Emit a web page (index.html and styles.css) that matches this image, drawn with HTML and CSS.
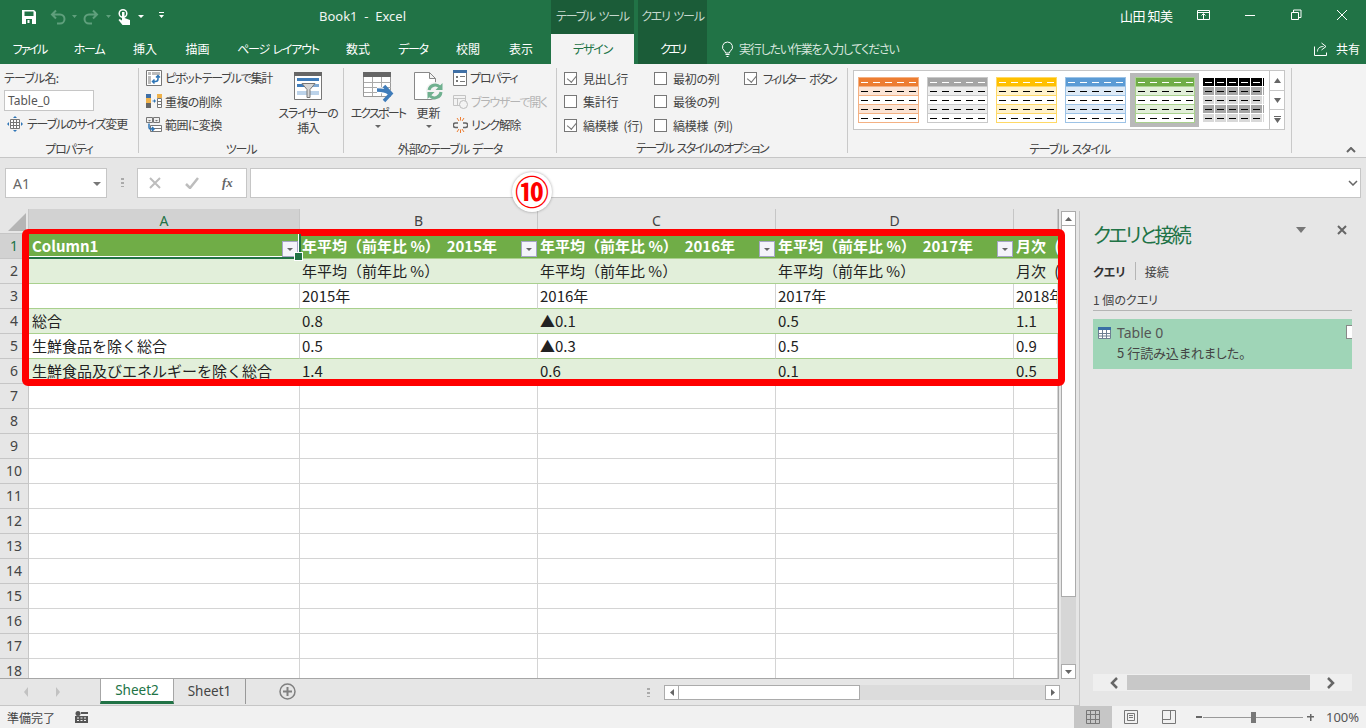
FILE: index.html
```html
<!DOCTYPE html>
<html lang="ja">
<head>
<meta charset="utf-8">
<title>Book1 - Excel</title>
<link rel="stylesheet" href="styles.css">
</head>
<body>
<div class="app">
  <header class="titlebar">
    <svg class="qat" width="170" height="34" viewBox="0 0 170 34">
      <path fill="#fff" fill-rule="evenodd" d="M22 10h12l2 2v12H22zM24.500 11.500V16h9v-4.500zM26 19v5h6v-5z"/>
      <rect x="27.500" y="20" width="2" height="3" fill="#fff"/>
      <g fill="none" stroke="#5f9f7c" stroke-width="2"><path d="M56 10.500L52 14.500l4 4M52.500 14.500H60a4.500 4.500 0 0 1 0 9h-3"/><path d="M93 10.500l4 4-4 4M96.500 14.500H89a4.500 4.500 0 0 0 0 9h3"/></g>
      <path fill="#5f9f7c" d="M72 15h5l-2.500 3zM106 15h5l-2.500 3z"/>
      <circle cx="123" cy="13.500" r="3.800" fill="none" stroke="#fff" stroke-width="1.500"/>
      <path fill="#fff" d="M122 12h2.500v6l5.500 2v5h-7.500l-4-5 1.200-1 2.300 1.500z"/>
      <path fill="#fff" d="M138 15h6l-3 3zM159 12h5v1h-5zM159 15h5l-2.500 3z"/>
    </svg>
    <div class="doc-title">Book1&nbsp; -&nbsp; Excel</div>
    <div class="ctx ctx-table">テーブル ツール</div>
    <div class="ctx-gap"></div>
    <div class="ctx ctx-query">クエリ ツール</div>
    <div class="user">山田 知美</div>
    <svg class="winctl" width="174" height="34" viewBox="0 0 174 34">
      <g fill="none" stroke="#fff">
        <path d="M6.500 10.500h12v9h-12zM6.500 12.500h12M12.500 19v-5M10.500 15.500l2-2 2 2"/>
        <path d="M54 15.500h10"/>
        <path d="M100.500 12.500h7v7h-7zM102.500 12v-2h7.500v7.500h-2"/>
        <path d="M146 10l10 10M156 10l-10 10"/>
      </g>
    </svg>
  </header>

  <nav class="tabbar">
    <span class="tab tab-tight">ファイル</span><span class="tab">ホーム</span><span class="tab kj0">挿入</span><span class="tab kj0">描画</span><span class="tab">ページ レイアウト</span><span class="tab kj0">数式</span><span class="tab">データ</span><span class="tab kj0">校閲</span><span class="tab kj0">表示</span><span></span>
    <span class="tab tab-active">デザイン</span><span></span><span class="tab tab-query">クエリ</span>
    <span class="search">
      <svg width="13" height="16" viewBox="0 0 13 16"><path fill="none" stroke="#fff" d="M6.500 1a5 5 0 0 0-3 9c.7.600 1 1.200 1 2h4c0-.8.300-1.400 1-2a5 5 0 0 0-3-9zM4.500 13.500h4M5.500 15.500h2"/></svg>
      実行したい作業を入力してください
    </span>
    <span class="share">
      <svg width="14" height="14" viewBox="0 0 14 14"><path fill="none" stroke="#fff" d="M.500 4.500v9h12v-3M3.500 9.500c0-3.500 2.500-5 6-5M7.500 1l4.500 3.500L7.500 8"/></svg>
      共有
    </span>
  </nav>

  <section class="ribbon">
    <div class="group g1">
      <div class="body col-body">
        <div class="name-label">テーブル名:</div>
        <div class="name-input">Table_0</div>
        <div class="line resize">
          <svg width="16" height="16" viewBox="0 0 16 16"><path fill="#fff" stroke="#777" d="M3.500 3.500h9v9h-9z"/><path stroke="#777" d="M6.500 3v9M9.500 3v9M3 6.500h9M3 9.500h9"/><path fill="#2e75b6" d="M8 0l2 2H6zM8 16l-2-2h4zM0 8l2-2v4zM16 8l-2 2V6z"/></svg>
          テーブルのサイズ変更
        </div>
      </div>
      <div class="glabel">プロパティ</div>
    </div>

    <div class="group g2">
      <div class="body row-body">
        <div class="stack stack-tools">
          <div class="line"><svg width="16" height="16" viewBox="0 0 16 16"><path fill="#fff" stroke="#777" d="M.500.500h15v15H.500z"/><path fill="#bbb" d="M2 2h3v3H2zM6 2h8v3H6zM2 6h3v8H2z"/><path fill="none" stroke="#2e75b6" stroke-width="1.500" d="M12 6v3c0 1.500-1 2.500-2.500 2.500H7M10 7.500l2-2 2 2M8.500 9.500l-2 2 2 2"/></svg>ピボットテーブルで集計</div>
          <div class="line kj"><svg width="16" height="16" viewBox="0 0 16 16"><path fill="#3f6fa5" d="M0 1h5v4H0z"/><path fill="#f0b24a" d="M0 5h5v5H0zM11 1h5v4h-5z"/><path fill="#666" d="M0 10h5v5H0z"/><path fill="#fff" stroke="#777" d="M11.500 5.500h4v9h-4z"/><path stroke="#777" d="M11 8.500h4M11 11.500h4"/><path fill="#2e75b6" d="M6.500 7.500H8V6l2 2-2 2V8.500H6.500z"/></svg>重複の削除</div>
          <div class="line kj"><svg width="16" height="16" viewBox="0 0 16 16"><path fill="#eee" stroke="#777" d="M.500.500h6v5h-6zM7.500.500h6v5h-6z"/><path fill="#777" d="M2 3h3l-1.500 1.500zM9 3h3l-1.500 1.500z"/><path fill="#fff" stroke="#777" d="M4.500 8.500h11v6h-11z"/><path stroke="#777" d="M5 11.500h10"/><path fill="none" stroke="#2e75b6" stroke-width="1.500" d="M3 6.500v4c0 1 .5 1.500 1.500 1.500H8M6 10l2 2-2 2"/></svg>範囲に変換</div>
        </div>
        <div class="big slicer">
          <svg width="28" height="28" viewBox="0 0 28 28"><path fill="#fff" stroke="#777" d="M.500 1.500h27v26H.500z"/><path fill="#666" d="M0 0h28v4H0z"/><path fill="#3f7cba" d="M3 6h22v3H3zM3 12h9v3H3z"/><path fill="#7fa9d3" d="M17 12h8v3h-8z"/><path fill="#bcd3ea" d="M3 19h22v4H3z"/><path fill="#d6d6d6" stroke="#777" d="M8 11.500h13l-5 6v8h-3v-8z"/></svg>
          <span class="big-text">スライサーの<br>挿入</span>
        </div>
      </div>
      <div class="glabel">ツール</div>
    </div>

    <div class="group g3">
      <div class="body row-body">
        <div class="big export">
          <svg class="over" width="30" height="28" viewBox="0 0 30 28"><path fill="#fff" stroke="#999" d="M.500 1.500h27v23H.500z"/><path fill="#666" d="M0 0h28v5H0z"/><path stroke="#aaa" d="M9.500 5v19M18.500 5v19M1 10.500h27M1 15.500h27M1 20.500h27"/><path fill="none" stroke="#fff" stroke-width="6" d="M14 18c4 0 8 0 12 3"/><path fill="none" stroke="#3f7cba" stroke-width="3.500" d="M14 18c4 0 8 0 12 3M21 14l7 7.500-7 7.500"/></svg>
          <span class="big-text tight">エクスポート</span>
          <span class="caret"></span>
        </div>
        <div class="big refresh">
          <svg width="30" height="28" viewBox="0 0 30 28"><path fill="#fff" stroke="#888" d="M.500.500h15l6 6v21H.500zM15.500.500v6h6"/><circle cx="21" cy="19" r="9" fill="#f3f3f3"/><path fill="none" stroke="#6fb08f" stroke-width="3" d="M15 18a6.500 6.500 0 0 1 11-3M27 20a6.500 6.500 0 0 1-11 4"/><path fill="#6fb08f" d="M28.500 11v7h-7zM13.500 27v-7h7z"/></svg>
          <span class="big-text kj0">更新</span>
          <span class="caret"></span>
        </div>
        <div class="stack stack-ext">
          <div class="line"><svg width="14" height="16" viewBox="0 0 14 16"><path fill="#fff" stroke="#777" d="M.500 1.500h13v14H.500z"/><path fill="#3f6fa5" d="M0 0h14v3H0z"/><path fill="#777" d="M3 6h2v2H3zM3 10h2v2H3zM7 6h5v1H7zM7 11h5v1H7z"/></svg>プロパティ</div>
          <div class="line line-off"><svg width="15" height="16" viewBox="0 0 15 16"><path fill="none" stroke="#c4c4c4" d="M.500 2.500h12v10H.500zM.500 5.500h12M4.500 5v8"/><circle cx="10.500" cy="11.500" r="4" fill="#f3f3f3" stroke="#bbb"/></svg>ブラウザーで開く</div>
          <div class="line"><svg width="15" height="16" viewBox="0 0 15 16"><path fill="none" stroke="#666" stroke-width="1.500" d="M5 6H2.500a2 2 0 0 0 0 4.500H5M10 6h2.500a2 2 0 0 1 0 4.500H10"/><path stroke="#ed7d31" d="M4 1l2 3M7.500 0v3.500M11 1L9 4M4 15l2-3M7.500 16v-3.500M11 15l-2-3"/></svg>リンク解除</div>
        </div>
      </div>
      <div class="glabel">外部のテーブル データ</div>
    </div>

    <div class="group g4">
      <div class="body checks">
        <div class="check"><span class="box on"></span>見出し行</div>
        <div class="check"><span class="box"></span>最初の列</div>
        <div class="check tight"><span class="box on"></span>フィルター ボタン</div>
        <div class="check"><span class="box"></span>集計行</div>
        <div class="check"><span class="box"></span>最後の列</div>
        <div class="check"></div>
        <div class="check"><span class="box on"></span>縞模様 (行)</div>
        <div class="check"><span class="box"></span>縞模様 (列)</div>
      </div>
      <div class="glabel glabel-tight">テーブル スタイルのオプション</div>
    </div>

    <div class="group g5">
      <div class="body">
        <div class="gallery">
          <div class="cell"><div class="sw orange"><i></i><i></i><i></i><i></i><i></i></div></div>
          <div class="cell"><div class="sw gray"><i></i><i></i><i></i><i></i><i></i></div></div>
          <div class="cell"><div class="sw yellow"><i></i><i></i><i></i><i></i><i></i></div></div>
          <div class="cell"><div class="sw blue"><i></i><i></i><i></i><i></i><i></i></div></div>
          <div class="cell cell-sel"><div class="sw green"><i></i><i></i><i></i><i></i><i></i></div></div>
          <div class="cell"><div class="sw black"><i></i><i></i><i></i><i></i><i></i></div></div>
          <div class="gal-btns">
            <span class="gal-btn"><svg width="7" height="5" viewBox="0 0 7 5"><path fill="#666" d="M3.500 0L7 5H0z"/></svg></span>
            <span class="gal-btn"><svg width="7" height="5" viewBox="0 0 7 5"><path fill="#666" d="M3.500 5L7 0H0z"/></svg></span>
            <span class="gal-btn"><svg width="7" height="7" viewBox="0 0 7 7"><path fill="#666" d="M0 0h7v1H0zM3.500 7L7 2H0z"/></svg></span>
          </div>
        </div>
      </div>
      <div class="glabel">テーブル スタイル</div>
    </div>

    <div class="collapse">
      <svg width="10" height="6" viewBox="0 0 10 6"><path fill="none" stroke="#666" stroke-width="2" d="M1 5l4-4 4 4"/></svg>
    </div>
  </section>

  <section class="formula">
    <div class="namebox"><span>A1</span><svg width="8" height="4" viewBox="0 0 8 4"><path fill="#777" d="M0 0h8L4 4z"/></svg></div>
    <div class="fdots"></div>
    <div class="fbtns">
      <svg width="12" height="12" viewBox="0 0 12 12"><path stroke="#bdbdbd" stroke-width="2" d="M1 1l10 10M11 1L1 11"/></svg>
      <svg width="14" height="12" viewBox="0 0 14 12"><path fill="none" stroke="#bdbdbd" stroke-width="2.500" d="M1 7l4 4 8-10"/></svg>
      <span class="fx">fx</span>
    </div>
    <div class="finput"><svg width="10" height="6" viewBox="0 0 10 6"><path fill="none" stroke="#666" stroke-width="1.500" d="M1 1l4 4 4-4"/></svg></div>
  </section>

  <main class="main">
    <div class="workarea">
      <div class="gridrow">
        <div class="sheet">
          <table class="grid">
            <colgroup><col class="c0"><col class="ca"><col class="cb"><col class="cb"><col class="cb"><col class="ce"></colgroup>
            <tr class="heads">
              <th class="corner"><svg width="18" height="18" viewBox="0 0 18 18"><path fill="#b5b5b5" d="M18 0v18H0z"/></svg></th>
              <th class="hl-col">A</th><th>B</th><th>C</th><th>D</th><th></th>
            </tr>
            <tr class="thead">
              <th class="hl-row">1</th>
              <td class="a1">Column1<span class="filter"></span></td>
              <td class="pre">年平均（前年比 %）  2015年<span class="filter"></span></td>
              <td class="pre">年平均（前年比 %）  2016年<span class="filter"></span></td>
              <td class="pre">年平均（前年比 %）  2017年<span class="filter"></span></td>
              <td class="col-e">月次 (</td>
            </tr>
            <tr class="band"><th>2</th><td></td><td>年平均（前年比 %）</td><td>年平均（前年比 %）</td><td>年平均（前年比 %）</td><td class="col-e">月次 (</td></tr>
            <tr class="plain"><th>3</th><td></td><td>2015年</td><td>2016年</td><td>2017年</td><td>2018年</td></tr>
            <tr class="band"><th>4</th><td>総合</td><td>0.8</td><td>▲0.1</td><td>0.5</td><td>1.1</td></tr>
            <tr class="plain"><th>5</th><td>生鮮食品を除く総合</td><td>0.5</td><td>▲0.3</td><td>0.5</td><td>0.9</td></tr>
            <tr class="band"><th>6</th><td>生鮮食品及びエネルギーを除く総合</td><td>1.4</td><td>0.6</td><td>0.1</td><td>0.5</td></tr>
            <tr><th>7</th><td></td><td></td><td></td><td></td><td></td></tr>
            <tr><th>8</th><td></td><td></td><td></td><td></td><td></td></tr>
            <tr><th>9</th><td></td><td></td><td></td><td></td><td></td></tr>
            <tr><th>10</th><td></td><td></td><td></td><td></td><td></td></tr>
            <tr><th>11</th><td></td><td></td><td></td><td></td><td></td></tr>
            <tr><th>12</th><td></td><td></td><td></td><td></td><td></td></tr>
            <tr><th>13</th><td></td><td></td><td></td><td></td><td></td></tr>
            <tr><th>14</th><td></td><td></td><td></td><td></td><td></td></tr>
            <tr><th>15</th><td></td><td></td><td></td><td></td><td></td></tr>
            <tr><th>16</th><td></td><td></td><td></td><td></td><td></td></tr>
            <tr><th>17</th><td></td><td></td><td></td><td></td><td></td></tr>
            <tr><th>18</th><td></td><td></td><td></td><td></td><td></td></tr>
          </table>
        </div>
        <div class="vscroll">
          <span class="sbtn"><svg width="7" height="4" viewBox="0 0 7 4"><path fill="#666" d="M3.500 0L7 4H0z"/></svg></span>
          <span class="vthumb"></span>
          <span class="vtrack"></span>
          <span class="sbtn"><svg width="7" height="4" viewBox="0 0 7 4"><path fill="#666" d="M3.500 4L7 0H0z"/></svg></span>
        </div>
      </div>
      <div class="sheetbar">
        <div class="navs">
          <svg width="36" height="10" viewBox="0 0 36 10"><path fill="#c2c2c2" d="M4 0v10L0 5zM32 0v10l4-5z"/></svg>
        </div>
        <div class="stab stab-on">Sheet2</div>
        <div class="stab">Sheet1</div>
        <svg class="addsheet" width="17" height="17" viewBox="0 0 17 17"><circle cx="8.500" cy="8.500" r="7.500" fill="none" stroke="#808080" stroke-width="1.500"/><path stroke="#808080" stroke-width="2" d="M8.500 4v9M4 8.500h9"/></svg>
        <div class="splitdots"></div>
        <div class="hscroll">
          <span class="sbtn"><svg width="4" height="7" viewBox="0 0 4 7"><path fill="#666" d="M0 3.500L4 0v7z"/></svg></span>
          <span class="hthumb"></span>
          <span class="htrack"></span>
          <span class="sbtn"><svg width="4" height="7" viewBox="0 0 4 7"><path fill="#666" d="M4 3.500L0 0v7z"/></svg></span>
        </div>
      </div>
    </div>

    <aside class="pane">
      <div class="pane-head">
        <h2 class="pane-title">クエリと接続</h2>
        <svg class="pane-caret" width="10" height="6" viewBox="0 0 10 6"><path fill="#777" d="M0 0h10L5 6z"/></svg>
        <svg class="pane-x" width="10" height="10" viewBox="0 0 10 10"><path stroke="#666" stroke-width="2" d="M1 1l8 8M9 1L1 9"/></svg>
      </div>
      <div class="pane-tabs"><b>クエリ</b><span class="pane-sep"></span><span>接続</span></div>
      <div class="pane-count">1 個のクエリ</div>
      <div class="qcard">
        <div class="qname">
          <svg width="13" height="12" viewBox="0 0 13 12"><path fill="#fff" stroke="#6d7f92" d="M.500.500h12v11H.500z"/><path fill="#3a6ea5" d="M0 0h13v3H0z"/><path stroke="#6d7f92" d="M4.500 3v8M8.500 3v8M1 6.500h11M1 9h11"/></svg>
          <span>Table 0</span>
        </div>
        <div class="qinfo">5 行読み込まれました。</div>
        <span class="qcheck"></span>
      </div>
      <div class="pane-scroll">
        <svg width="10" height="12" viewBox="0 0 10 12"><path fill="none" stroke="#666" stroke-width="2.500" d="M8 1L3 6l5 5"/></svg>
        <span class="pthumb"></span>
        <svg class="pnext" width="10" height="12" viewBox="0 0 10 12"><path fill="none" stroke="#666" stroke-width="2.500" d="M2 1l5 5-5 5"/></svg>
      </div>
    </aside>
  </main>

  <footer class="status">
    <span class="ready">準備完了</span>
    <svg class="macro" width="13" height="12" viewBox="0 0 13 12"><circle cx="3" cy="2.500" r="2.500" fill="#555"/><path fill="#555" d="M6 1h7v2H6zM0 5h13v7H0z"/><path fill="#f1f1f1" d="M2 6.500h2v1H2zM5.500 6.500h2v1h-2zM9 6.500h2v1H9zM2 9h2v1H2zM5.500 9h2v1h-2zM9 9h2v1H9z"/></svg>
    <div class="views">
      <span class="view view-on"><svg width="14" height="14" viewBox="0 0 14 14"><path fill="none" stroke="#777" d="M.500.500h13v13H.500zM4.500 0v14M9.500 0v14M0 4.500h14M0 9.500h14"/></svg></span>
      <span class="view"><svg width="14" height="14" viewBox="0 0 14 14"><path fill="none" stroke="#777" d="M.500.500h13v13H.500zM3.500 3.500h7v7h-7zM5 5.500h4M5 7.500h4"/></svg></span>
      <span class="view"><svg width="14" height="14" viewBox="0 0 14 14"><path fill="none" stroke="#777" d="M.500.500h13v13H.500zM.500 9.500h8V.500"/></svg></span>
    </div>
    <div class="zoom">
      <span class="z-minus"></span>
      <span class="z-track"><span class="z-thumb"></span></span>
      <span class="z-plus"></span>
    </div>
    <span class="pct">100%</span>
  </footer>

  <div class="redbox"></div>
  <div class="badge">⑩</div>
</div>
</body>
</html>
```
FILE: styles.css
```css
* { box-sizing: border-box; }
html, body { margin: 0; padding: 0; }
body { font-family: "Noto Sans CJK JP", "Noto Sans", sans-serif; background: #e6e6e6; overflow: hidden; }
.app { position: relative; width: 1366px; height: 728px; display: flex; flex-direction: column; overflow: hidden; color: #444; }

/* title bar */
.titlebar { height: 34px; background: #217346; display: flex; color: #fff; font-size: 12px; font-feature-settings: "palt"; flex: none; }
.titlebar > * { flex: none; }
.doc-title { width: 232px; margin-left: 149px; font: 13px/32px "Noto Sans", sans-serif; color: #f0f5f2; }
.ctx { background: #1b5c38; line-height: 32px; text-align: center; color: #c5d8cd; letter-spacing: -1.2px; word-spacing: 2px; }
.ctx-table { width: 83px; }
.ctx-gap { width: 4px; }
.ctx-query { width: 69px; }
.user { margin-left: 413px; width: 70px; line-height: 31px; font-size: 13px; letter-spacing: -.5px; }
.winctl { margin-left: 1px; }

.tabbar { height: 30px; background: #217346; display: grid; grid-template-columns: 59px 60px 52px 53px 108px 52px 58px 52px 54px 3px 83px 4px 69px 1fr auto; color: #fff; font-size: 12px; font-feature-settings: "palt"; flex: none; }
.tab { text-align: center; line-height: 29px; letter-spacing: -1.2px; word-spacing: 2px; }
.tab-tight { letter-spacing: -2px; }
.tab-active { background: #f3f3f3; color: #217346; }
.tab-query { background: #1b5c38; letter-spacing: -2.500px; }
.tab.kj0 { letter-spacing: 0; }
.search { display: flex; align-items: center; gap: 5px; padding-left: 14px; color: #d7e5dd; height: 29px; letter-spacing: -1.2px; }
.share { display: flex; align-items: center; gap: 8px; padding-right: 6px; height: 29px; }

/* ribbon */
.ribbon { height: 94px; background: #f3f3f3; border-bottom: 1px solid #c6c6c6; display: flex; padding-top: 4px; font-size: 12px; font-feature-settings: "palt"; letter-spacing: -1.2px; word-spacing: 2px; flex: none; position: relative; }
.group { height: 85px; display: flex; flex-direction: column; border-right: 1px solid #c9c9c9; flex: none; }
.body { height: 75px; }
.glabel { height: 10px; line-height: 12px; text-align: center; white-space: nowrap; color: #444; }
.glabel-tight { letter-spacing: -1.6px; }
.g1 { width: 139px; }
.g2 { width: 205px; }
.g3 { width: 213px; }
.g4 { width: 291px; }
.g5 { width: 444px; }
.col-body { display: flex; flex-direction: column; padding-left: 4px; }
.row-body { display: flex; }
.name-label { height: 21px; line-height: 20px; letter-spacing: -.8px; }
.name-input { width: 90px; height: 21px; margin-top: 1px; background: #fff; border: 1px solid #c6c6c6; font: 12px/19px "Noto Sans", sans-serif; letter-spacing: 0; padding-left: 3px; color: #555; }
.line { height: 23.500px; display: flex; align-items: center; gap: 3px; white-space: nowrap; }
.line svg { flex: none; }
.line.kj { letter-spacing: -.6px; }
.kj0 { letter-spacing: 0; }
.tight { letter-spacing: -1.8px; }
.resize { margin-top: 1px; margin-left: 3px; gap: 4px; }
.stack { margin-top: -2px; }
.stack-tools { margin-left: 7px; width: 124px; }
.stack-ext { margin-left: 2px; }
.big { display: flex; flex-direction: column; align-items: center; text-align: center; padding-top: 4px; }
.big-text { line-height: 15px; margin-top: 5px; white-space: nowrap; }
.over { overflow: visible; }
.slicer { width: 60px; margin-left: 8px; }
.export { width: 60px; margin-left: 4px; }
.refresh { width: 45px; margin-left: -2px; }
.caret { width: 0; height: 0; border: 3px solid transparent; border-top: 3px solid #666; margin-top: 5px; }
.line-off { color: #b4b4b4; }
.checks { display: grid; grid-template-columns: 90px 90px 1fr; grid-auto-rows: 23.500px; padding: 0 0 0 7px; margin-top: -1.500px; letter-spacing: -.3px; word-spacing: 3px; }
.check { display: flex; align-items: center; gap: 6px; white-space: nowrap; }
.check.tight { letter-spacing: -2.200px; word-spacing: 4px; }
.box { width: 13px; height: 13px; background: #fff; border: 1px solid #777; flex: none; position: relative; }
.box.on::after { content: ""; position: absolute; left: 3.500px; top: 0.500px; width: 5px; height: 8px; border: solid #777; border-width: 0 1.500px 1.500px 0; transform: rotate(40deg); }

.gallery { margin: 2px 0 0 5px; width: 432px; height: 60px; background: #fff; border: 1px solid #c6c6c6; display: flex; align-items: center; }
.cell { width: 69px; height: 54px; display: flex; align-items: center; justify-content: center; flex: none; }
.cell-sel { background: #b9b9b9; }
.sw { width: 61px; --c: #000; --t: #fff; --b: #ccc; --d: #000; background: var(--b); padding: 1px; display: flex; flex-direction: column; gap: 1px; }
.sw i { display: block; height: 8px; background: repeating-linear-gradient(90deg, var(--d) 0 7px, transparent 7px 12px) 2px 4px / 100% 1px no-repeat, #fff; }
.sw i:nth-child(2), .sw i:nth-child(4) { background: repeating-linear-gradient(90deg, var(--d) 0 7px, transparent 7px 12px) 2px 4px / 100% 1px no-repeat, var(--t); }
.sw i:first-child { background: repeating-linear-gradient(90deg, #fff 0 7px, transparent 7px 12px) 2px 4px / 100% 1px no-repeat, var(--c); }
.orange { --c: #ed7d31; --t: #fbe4d5; --b: #f4b183; }
.gray { --c: #a5a5a5; --t: #ededed; --b: #c9c9c9; }
.yellow { --c: #ffc000; --t: #fff2cc; --b: #ffd966; }
.blue { --c: #5b9bd5; --t: #deeaf6; --b: #9dc3e6; }
.green { --c: #70ad47; --t: #e2efd9; --b: #a9d18e; }
.sw.green { width: 60px; }
.black { background: #fff; padding: 0 0 1px; }
.black i { background: repeating-linear-gradient(90deg, transparent 0 11px, #fff 11px 12px), repeating-linear-gradient(90deg, #000 0 7px, transparent 7px 12px) 2px 4px / 100% 1px no-repeat, #d9d9d9; }
.black i:nth-child(2), .black i:nth-child(4) { background: repeating-linear-gradient(90deg, transparent 0 11px, #fff 11px 12px), repeating-linear-gradient(90deg, #000 0 7px, transparent 7px 12px) 2px 4px / 100% 1px no-repeat, #a6a6a6; }
.black i:first-child { background: repeating-linear-gradient(90deg, transparent 0 11px, #fff 11px 12px), repeating-linear-gradient(90deg, #fff 0 7px, transparent 7px 12px) 2px 4px / 100% 1px no-repeat, #000; }
.gal-btns { margin-left: auto; width: 15px; height: 100%; display: flex; flex-direction: column; border-left: 1px solid #c6c6c6; background: #fff; }
.gal-btn { flex: 1; display: flex; align-items: center; justify-content: center; border-bottom: 1px solid #c6c6c6; }
.gal-btn:last-child { border-bottom: 0; }
.collapse { margin-left: auto; margin-right: 10px; padding-top: 79px; line-height: 0; }

/* formula bar */
.formula { height: 51px; display: flex; padding: 10px 5px 11px; flex: none; }
.namebox { width: 102px; background: #fff; border: 1px solid #c6c6c6; display: flex; align-items: center; justify-content: space-between; padding: 1px 5px 0 7px; font: 14px "Noto Sans", sans-serif; color: #666; flex: none; }
.fdots { width: 3px; height: 9px; margin: 10px 13px 0 14px; background: repeating-linear-gradient(#aaa 0 2px, transparent 2px 4px); flex: none; }
.fbtns { width: 110px; background: #fff; border: 1px solid #c6c6c6; display: flex; align-items: center; gap: 24px; padding-left: 11px; flex: none; }
.fx { font: italic bold 13px "Liberation Serif", serif; color: #666; margin-left: -1px; }
.finput { flex: 1; margin-left: 3px; background: #fff; border: 1px solid #c6c6c6; display: flex; align-items: center; justify-content: flex-end; padding-right: 2px; }

/* main */
.main { height: 497px; display: flex; flex: none; }
.workarea { width: 1079px; display: flex; flex-direction: column; flex: none; }
.gridrow { height: 470px; display: flex; flex: none; }
.sheet { width: 1059px; height: 470px; overflow: hidden; border-right: 1px solid #a6a6a6; border-bottom: 1px solid #a6a6a6; }
.grid { border-collapse: separate; border-spacing: 0; table-layout: fixed; width: 1058px; font-size: 15px; color: #222; }
.c0 { width: 29px; }
.ca { width: 271px; }
.cb { width: 238px; }
.ce { width: 44px; }
.grid tr { height: 25px; }
.grid th { background: #e6e6e6; font-weight: 400; font-size: 14px; line-height: 18px; color: #444; border-right: 1px solid #c6c6c6; border-bottom: 1px solid #c6c6c6; padding: 0; font-family: "Noto Sans", sans-serif; height: 25px; }
.grid td { background: #fff; border-right: 1px solid #d4d4d4; border-bottom: 1px solid #d4d4d4; padding: 0 0 0 2px; white-space: nowrap; overflow: hidden; height: 25px; line-height: 22px; position: relative; }
.grid td:first-of-type { padding-left: 3px; }
.corner { position: relative; line-height: 0; text-align: right; vertical-align: middle; }
.corner svg { margin-right: 2px; display: inline-block; vertical-align: middle; }
.grid th.hl-col, .grid th.hl-row { background: #d2d2d2; color: #217346; }
.thead td { background: #70ad47; color: #fff; font-weight: 700; border-right: 0; border-bottom: 1px solid #a9d08e; overflow: hidden; }
.pre { white-space: pre !important; }
.col-e { word-spacing: 5px; }
.band td { background: #e2efda; border-right: 0; border-bottom: 1px solid #a9d08e; }
.plain td { border-bottom: 1px solid #a9d08e; }
.filter { position: absolute; right: 1px; top: 7px; width: 16px; height: 16px; background: #f4f4fa; border: 1px solid #a6a6c6; }
.filter::after { content: ""; position: absolute; left: 4px; top: 6px; border: 3.500px solid transparent; border-top: 3.500px solid #666; }
.grid td.a1 { overflow: visible; box-shadow: 1px 0 0 #217346, inset -1px -1px 0 #fff; z-index: 1; border-right: 1px solid #217346; border-bottom: 2px solid #217346; }
.a1 .filter { right: 1px; }
.a1::after { content: ""; position: absolute; right: -4px; bottom: -4px; width: 7px; height: 7px; background: #217346; border: 1px solid #fff; }

.vscroll { width: 20px; padding: 2px 3px 0 2px; display: flex; flex-direction: column; }
.sbtn { width: 15px; height: 15px; flex: none; background: #fff; border: 1px solid #ababab; display: flex; align-items: center; justify-content: center; }
.vthumb { height: 371px; background: #fff; border: 1px solid #ababab; border-top: 0; flex: none; }
.vtrack { flex: 1; background: #d6d6d6; }

.sheetbar { flex: 1; display: flex; align-items: flex-start; border-bottom: 1px solid #c6c6c6; }
.navs { width: 100px; padding: 8px 0 0 24px; line-height: 0; flex: none; }
.stab { width: 72px; height: 25px; text-align: center; font: 13.500px/24px "Noto Sans", sans-serif; color: #444; flex: none; border-right: 1px solid #999; }
.stab-on { width: 74px; background: #fff; color: #217346; border-left: 1px solid #a6a6a6; border-right: 1px solid #a6a6a6; border-bottom: 3px solid #217346; line-height: 23px; }
.addsheet { margin: 4px 0 0 33px; flex: none; }
.splitdots { width: 3px; height: 9px; margin: 9px 0 0 351px; background: repeating-linear-gradient(#aaa 0 2px, transparent 2px 4px); flex: none; }
.hscroll { display: flex; margin: 6px 0 0 14px; width: 396px; height: 15px; flex: none; }
.hthumb { width: 181px; background: #fff; border: 1px solid #ababab; border-left: 0; }
.htrack { flex: 1; background: #dcdcdc; }

/* pane */
.pane { flex: 1; border-left: 1px solid #c6c6c6; padding: 2px 14px 0 13px; display: flex; flex-direction: column; font-feature-settings: "palt"; margin-top: 2px; min-width: 0; }
.pane-head { display: flex; align-items: center; height: 44px; flex: none; }
.pane-title { margin: 0; width: 98px; flex: none; font-size: 20px; font-weight: 400; color: #217346; line-height: 54px; white-space: nowrap; letter-spacing: -2.500px; }
.pane-caret { margin-left: 105px; margin-top: -10px; flex: none; }
.pane-x { margin-left: 31px; margin-top: -10px; flex: none; }
.pane-tabs { display: flex; align-items: center; font-size: 12px; margin-top: 6px; height: 16px; flex: none; }
.pane-tabs b { color: #333; }
.pane-sep { width: 1px; height: 18px; background: #b5b5b5; margin: 0 9px; }
.pane-count { font-size: 12px; height: 20px; line-height: 18px; margin-top: 12px; border-bottom: 1px solid #b5b5b5; flex: none; }
.qcard { position: relative; height: 50px; margin-top: 8px; background: #9fd5b7; padding: 4px 0 0 5px; font-size: 13px; color: #555; flex: none; }
.qname { display: flex; align-items: center; gap: 6px; height: 19px; font-family: "Noto Sans", sans-serif; font-size: 14px; }
.qinfo { padding: 1px 0 0 19px; line-height: 20px; color: #444; }
.qcheck { position: absolute; right: 0; top: 6px; width: 6px; height: 14px; background: #fff; border: 1px solid #888; border-right: 0; }
.pane-scroll { margin-top: auto; margin-bottom: 15px; height: 17px; background: #efefef; display: flex; align-items: center; padding-left: 16px; flex: none; }
.pthumb { width: 183px; height: 15px; background: #c8c8c8; margin-left: 8px; }
.pnext { margin-left: 16px; }

/* status */
.status { flex: 1; background: #f1f1f1; display: flex; align-items: center; font-size: 12px; font-feature-settings: "palt"; padding-left: 7px; }
.ready { width: 68px; flex: none; }
.macro { flex: none; }
.views { margin-left: 986px; display: flex; height: 100%; flex: none; }
.view { width: 38px; display: flex; align-items: center; justify-content: center; }
.view-on { background: #c6c6c6; }
.zoom { display: flex; align-items: center; margin-left: 8px; flex: none; }
.z-minus { width: 6px; height: 2px; background: #666; }
.z-track { display: block; width: 100px; height: 1px; margin: 0 4px 0 1px; background: #999; position: relative; }
.z-thumb { position: absolute; left: 48px; top: -5px; width: 5px; height: 11px; background: #777; }
.z-plus { width: 7px; height: 7px; background: linear-gradient(#666,#666) center / 7px 1.500px no-repeat, linear-gradient(#666,#666) center / 1.500px 7px no-repeat; }
.pct { margin-left: 12px; font: 13px "Noto Sans", sans-serif; color: #555; flex: none; }

/* annotation overlays */
.redbox { position: absolute; left: 22px; top: 229px; width: 1043px; height: 157px; border: 7px solid #f00; border-radius: 6px; }
.badge { position: absolute; left: 512px; top: 172px; width: 40px; height: 40px; border-radius: 50%; background: #fff; box-shadow: 0 0 3px rgba(0,0,0,.35); color: #f00; font-size: 34px; font-weight: 700; line-height: 38px; text-align: center; }
```
